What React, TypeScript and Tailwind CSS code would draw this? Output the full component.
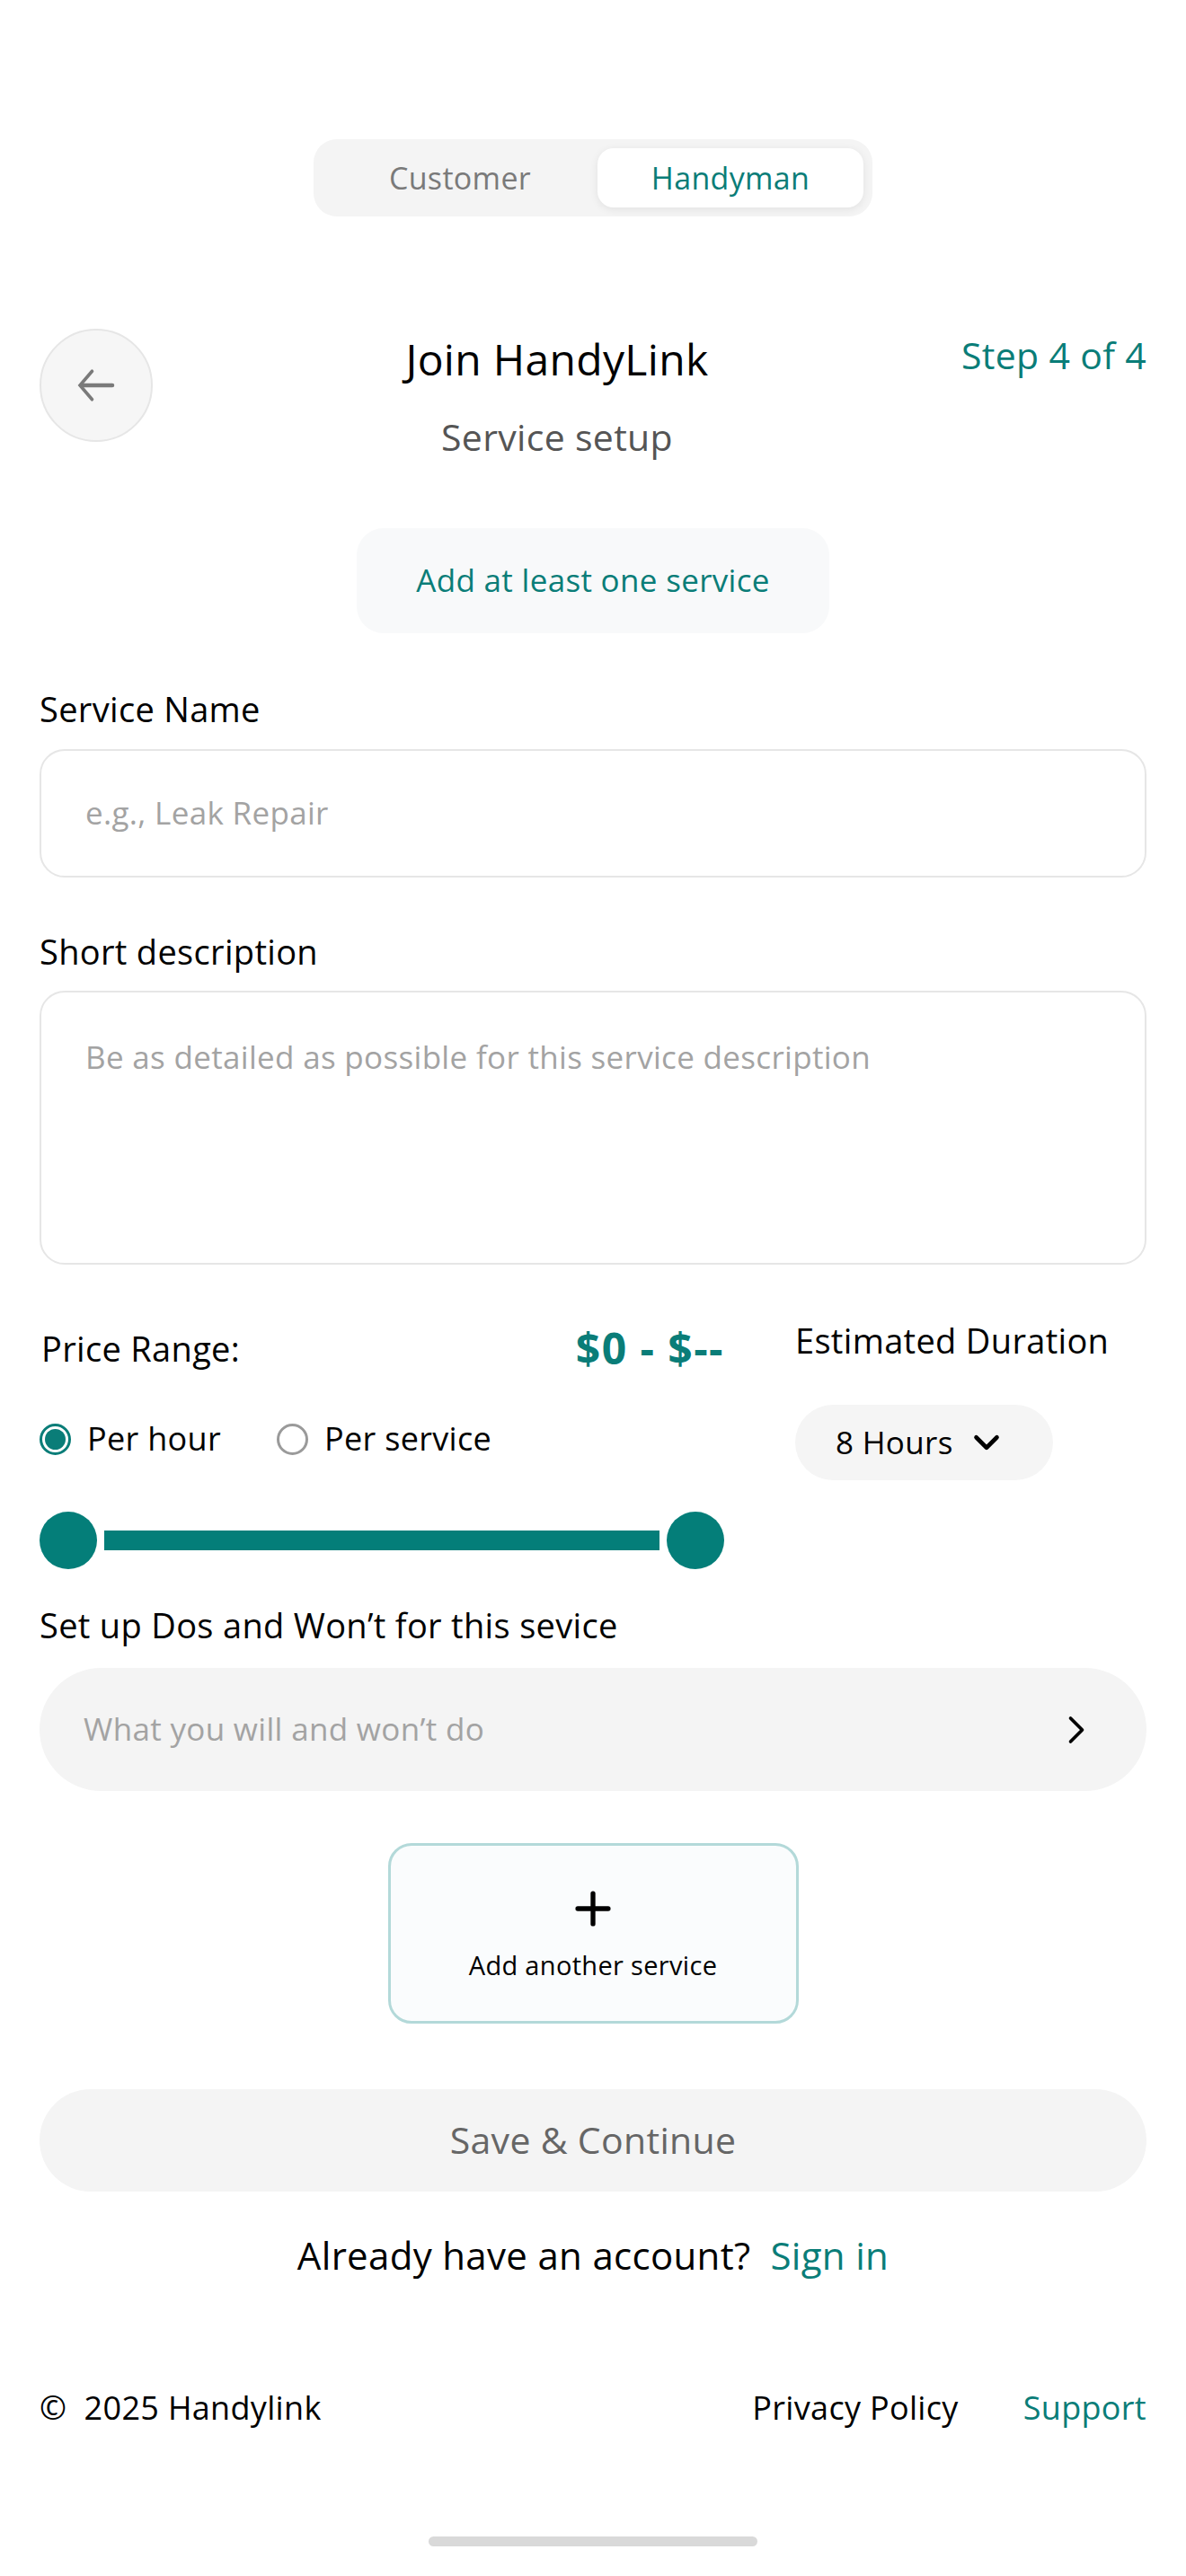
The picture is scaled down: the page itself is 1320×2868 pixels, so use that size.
import { ChevronDown, ChevronRight, Plus } from "lucide-react";

const TEAL = "text-[#0a7d78]";

function RoleToggle() {
  return (
    <div className="mx-auto flex h-[86px] w-[622px] items-center rounded-[26px] bg-[#f4f4f4] p-[10px]">
      <div className="flex h-full flex-1 items-center justify-center text-[34px] text-[#7a7a7a]">
        Customer
      </div>
      <div
        className={`flex h-full w-[296px] items-center justify-center rounded-[18px] bg-white text-[34px] shadow-[0_2px_10px_rgba(0,0,0,0.08)] ${TEAL}`}
      >
        Handyman
      </div>
    </div>
  );
}

function BackButton() {
  return (
    <button className="flex size-[126px] shrink-0 items-center justify-center rounded-full border-2 border-[#e6e6e6] bg-[#f6f6f6]">
      <svg width="54" height="54" viewBox="0 0 24 24" fill="none" stroke="#7a7a7a" strokeWidth="1.6" strokeLinecap="round">
        <path d="M20 12H5" strokeWidth="2" />
        <path d="M10 5l-6 7 6 7" />
      </svg>
    </button>
  );
}

function Radio({ checked, label }: { checked?: boolean; label: string }) {
  return (
    <label className="flex items-center gap-[18px]">
      {checked ? (
        <span className="flex size-[35px] items-center justify-center rounded-full border-[3px] border-[#0a7d78]">
          <span className="size-[23px] rounded-full bg-[#0a7d78]" />
        </span>
      ) : (
        <span className="size-[35px] rounded-full border-[3px] border-[#9a9a9a]" />
      )}
      <span className="text-[36px] leading-[52px] text-black">{label}</span>
    </label>
  );
}

export default function App() {
  return (
    <div className="relative min-h-[2868px] w-[1320px] bg-white px-[44px] pt-[155px] font-['Open_Sans',sans-serif] tracking-[0.02em] text-black">
      <RoleToggle />

      {/* Header */}
      <header className="mt-[125px] flex items-start">
        <BackButton />
        <div className="flex flex-1 flex-col items-center pt-[8px]">
          <h1 className="text-[48px] leading-[52px]">Join HandyLink</h1>
          <p className="mt-[36px] text-[41px] leading-[48px] text-[#555]">Service setup</p>
        </div>
        <span className={`pt-[5px] text-[41px] leading-[48px] ${TEAL}`}>Step 4 of 4</span>
      </header>

      <div className="mt-[78px] flex justify-center">
        <div className={`flex h-[117px] w-[526px] items-center justify-center rounded-[30px] bg-[#f8f9fa] text-[35px] ${TEAL}`}>
          Add at least one service
        </div>
      </div>

      {/* Service name */}
      <label className="mt-[62px] block text-[38px] leading-[44px]">Service Name</label>
      <div className="mt-[23px] flex h-[143px] items-center rounded-[28px] border-2 border-[#e6e6e6] px-[49px] text-[35px] text-[#a3a3a3]">
        e.g., Leak Repair
      </div>

      <label className="mt-[60px] block text-[38px] leading-[44px]">Short description</label>
      <div className="mt-[22px] h-[305px] rounded-[28px] border-2 border-[#e6e6e6] px-[49px] pt-[50px] text-[35px] leading-[44px] text-[#a3a3a3]">
        Be as detailed as possible for this service description
      </div>

      {/* Price + duration */}
      <div className="mt-[62px] grid grid-cols-[762px_1fr] gap-x-[79px]">
        <div>
          <div className="flex items-center justify-between pl-[2px] pt-[6px]">
            <span className="text-[38px] leading-[44px]">Price Range:</span>
            <span className={`text-[48px] font-bold leading-[50px] tracking-[0.03em] ${TEAL}`}>$0 - $--</span>
          </div>
          <div className="mt-[50px] flex items-center gap-[62px]">
            <Radio checked label="Per hour" />
            <Radio label="Per service" />
          </div>
          <div className="mt-[55px] flex items-center">
            <span className="size-[64px] shrink-0 rounded-full bg-[#047e79]" />
            <span className="mx-[8px] h-[22px] flex-1 bg-[#047e79]" />
            <span className="size-[64px] shrink-0 rounded-full bg-[#047e79]" />
          </div>
        </div>
        <div>
          <span className="block text-[38px] leading-[44px]">Estimated Duration</span>
          <button className="mt-[50px] flex h-[84px] w-[287px] items-center gap-[14px] rounded-full bg-[#f5f5f5] pl-[45px] text-[35px]">
            8 Hours
            <ChevronDown size={46} strokeWidth={2.4} />
          </button>
        </div>
      </div>

      <label className="mt-[40px] block text-[38px] leading-[44px]">Set up Dos and Won’t for this sevice</label>
      <div className="mt-[26px] flex h-[137px] items-center justify-between rounded-full bg-[#f4f4f4] pl-[49px] pr-[52px] text-[35px] text-[#a3a3a3]">
        What you will and won’t do
        <ChevronRight size={52} strokeWidth={1.7} className="text-black" />
      </div>

      <div className="mt-[58px] flex justify-center">
        <button className="flex h-[201px] w-[457px] flex-col items-center justify-center rounded-[26px] border-[3px] border-[#b3d9d9] bg-[#fafcfd]">
          <Plus size={58} strokeWidth={2.2} />
          <span className="mt-[12px] text-[29px]">Add another service</span>
        </button>
      </div>

      <button className="mt-[73px] flex h-[114px] w-full items-center justify-center rounded-full bg-[#f4f4f4] text-[41px] text-[#666]">
        Save &amp; Continue
      </button>

      <p className="mt-[40px] text-center text-[42px] leading-[61px]">
        Already have an account?<span className={`ml-[22px] ${TEAL}`}>Sign in</span>
      </p>

      <footer className="mt-[113px] flex items-center text-[36px]">
        <span>©&nbsp;&nbsp;2025 Handylink</span>
        <span className="ml-auto">Privacy Policy</span>
        <span className={`ml-[72px] ${TEAL}`}>Support</span>
      </footer>

      <div className="absolute bottom-[33px] left-1/2 h-[11px] w-[366px] -translate-x-1/2 rounded-full bg-[#d9d9d9]" />
    </div>
  );
}
